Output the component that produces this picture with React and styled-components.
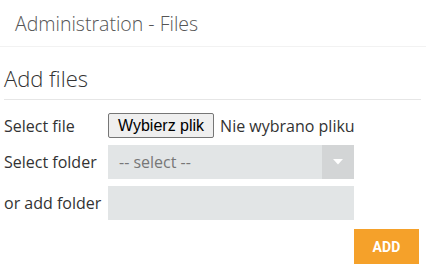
import styled, { createGlobalStyle } from 'styled-components';

const GlobalStyle = createGlobalStyle`
    body{
        margin: 0;
        background: #fff;
        font-family: 'Open Sans', sans-serif;
        color: #333;
    }
`

const Page = styled.div`
    display: flex;
    flex-direction: column;
`

const TopBar = styled.header`
    height: 46px;
    padding-left: 15px;
    display: flex;
    align-items: center;
    border-bottom: 1px solid #f2f2f2;
    h1{
        margin: 0;
        font-size: 19.5px;
        font-weight: 300;
        color: #555;
    }
`

const Section = styled.section`
    padding: 0 5px 0 4px;
`

const SectionTitle = styled.h2`
    margin: 0;
    padding: 16px 0 6px;
    font-size: 22px;
    font-weight: 300;
    color: #333;
    border-bottom: 1px solid #e6e6e6;
`

const Form = styled.form`
    display: grid;
    grid-template-columns: 104px 246px;
    row-gap: 7px;
    align-items: center;
    padding-top: 13px;
`

const Label = styled.label`
    font-size: 16px;
    color: #333;
`

const FilePicker = styled.div`
    display: flex;
    align-items: center;
    gap: 6px;
    white-space: nowrap;
    span{
        font-size: 16px;
        color: #333;
    }
`

const FileButton = styled.button`
    font-family: 'Liberation Sans', Arial, sans-serif;
    font-size: 16px;
    height: 25px;
    padding: 0 9px;
    background: #efefef;
    border: 1px solid #767676;
    border-radius: 2px;
    color: #000;
`

const SelectBox = styled.div`
    display: flex;
    height: 34px;
    background: #e2e5e6;
    .value{
        flex: 1;
        display: flex;
        align-items: center;
        padding-left: 11px;
        font-size: 16px;
        color: #777;
    }
    .arrow{
        flex: 0 0 32px;
        display: flex;
        align-items: center;
        justify-content: center;
        background: #d3d5d6;
    }
`

const TextInput = styled.input`
    height: 34px;
    box-sizing: border-box;
    border: none;
    background: #e2e5e6;
    padding: 0 10px;
    font-family: inherit;
    font-size: 16px;
`

const Actions = styled.div`
    display: flex;
    justify-content: flex-end;
    padding: 9px 2px 0 0;
`

const AddButton = styled.button`
    width: 65px;
    height: 35px;
    border: none;
    background: #f5a12a;
    color: #fff;
    font-family: 'Roboto', sans-serif;
    font-weight: 700;
    font-size: 14px;
    letter-spacing: 0.2px;
`

function App() {
    return (
        <Page>
            <GlobalStyle />
            <TopBar>
                <h1>Administration - Files</h1>
            </TopBar>
            <Section>
                <SectionTitle>Add files</SectionTitle>
                <Form onSubmit={e => e.preventDefault()}>
                    <Label>Select file</Label>
                    <FilePicker>
                        <FileButton type="button">Wybierz plik</FileButton>
                        <span>Nie wybrano pliku</span>
                    </FilePicker>
                    <Label>Select folder</Label>
                    <SelectBox>
                        <div className="value">-- select --</div>
                        <div className="arrow">
                            <svg width="10" height="6" viewBox="0 0 10 6">
                                <path d="M0 0h10L5 5.5z" fill="#fff" />
                            </svg>
                        </div>
                    </SelectBox>
                    <Label>or add folder</Label>
                    <TextInput type="text" />
                </Form>
                <Actions>
                    <AddButton type="submit">ADD</AddButton>
                </Actions>
            </Section>
        </Page>
    )
}

export default App;
